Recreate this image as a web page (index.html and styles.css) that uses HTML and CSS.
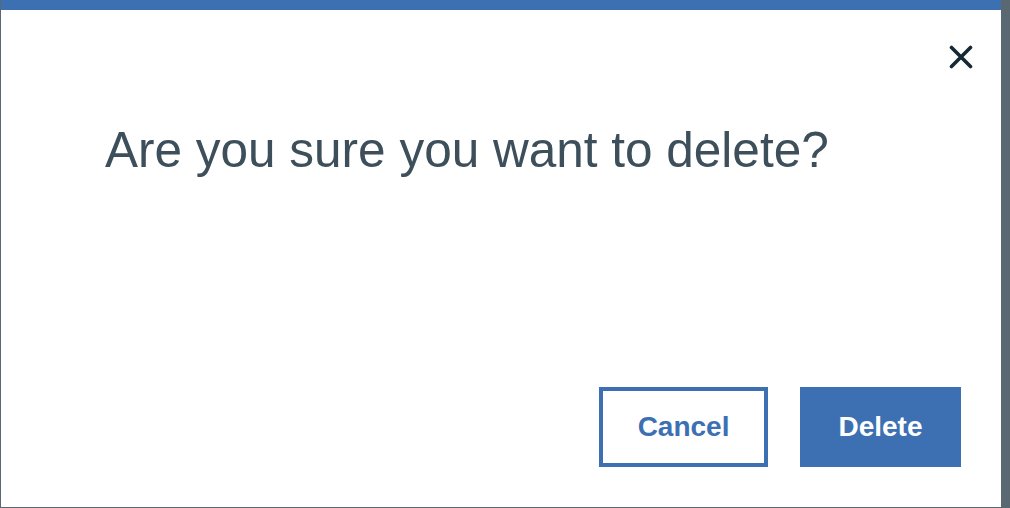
FILE: index.html
```html
<!DOCTYPE html>
<html lang="en">
<head>
<meta charset="utf-8">
<title>Delete confirmation</title>
<link rel="stylesheet" href="styles.css">
</head>
<body>
<div class="backdrop">
  <div class="modal" role="dialog" aria-labelledby="modal-title">
    <div class="modal-header">
      <button class="close" aria-label="Close">
        <svg width="24" height="24" viewBox="0 0 24 24" aria-hidden="true">
          <path d="M2.5 2.5 L21.5 21.5 M21.5 2.5 L2.5 21.5" stroke="#152934" stroke-width="3.6" stroke-linecap="round" fill="none"/>
        </svg>
      </button>
    </div>
    <h2 class="modal-title" id="modal-title">Are you sure you want to delete?</h2>
    <div class="modal-footer">
      <button class="btn btn-secondary">Cancel</button>
      <button class="btn btn-primary">Delete</button>
    </div>
  </div>
</div>
</body>
</html>
```

FILE: styles.css
```css
* { box-sizing: border-box; }
html, body {
  margin: 0;
  padding: 0;
  width: 1010px;
  height: 508px;
  overflow: hidden;
  background: #5a6872;
}
.backdrop {
  display: flex;
  align-items: flex-start;
  padding-left: 1px;
  height: 508px;
}
.modal {
  width: 1000px;
  height: 507px;
  background: #ffffff;
  border-top: 10px solid #3d70b2;
  display: flex;
  flex-direction: column;
  font-family: "Liberation Sans", Arial, sans-serif;
}
.modal-header {
  display: flex;
  justify-content: flex-end;
  padding: 35px 28px 0 0;
}
.close {
  width: 24px;
  height: 24px;
  padding: 0;
  border: 0;
  background: none;
  display: block;
  cursor: pointer;
}
.close svg { display: block; }
.modal-title {
  margin: 53px 0 0 0;
  padding-left: 104px;
  font-size: 49.5px;
  line-height: 1.15;
  font-weight: 300;
  color: #3d4f5b;
}
.modal-footer {
  margin-top: auto;
  display: flex;
  justify-content: flex-end;
  gap: 32px;
  padding: 0 40px 40px 0;
}
.btn {
  height: 80px;
  padding: 0 34.5px;
  font-family: "Liberation Sans", Arial, sans-serif;
  font-size: 28px;
  font-weight: 700;
  border: 4px solid #3d70b2;
  cursor: pointer;
}
.btn-secondary {
  background: #ffffff;
  color: #3d70b2;
}
.btn-primary {
  background: #3d70b2;
  color: #ffffff;
}
```
